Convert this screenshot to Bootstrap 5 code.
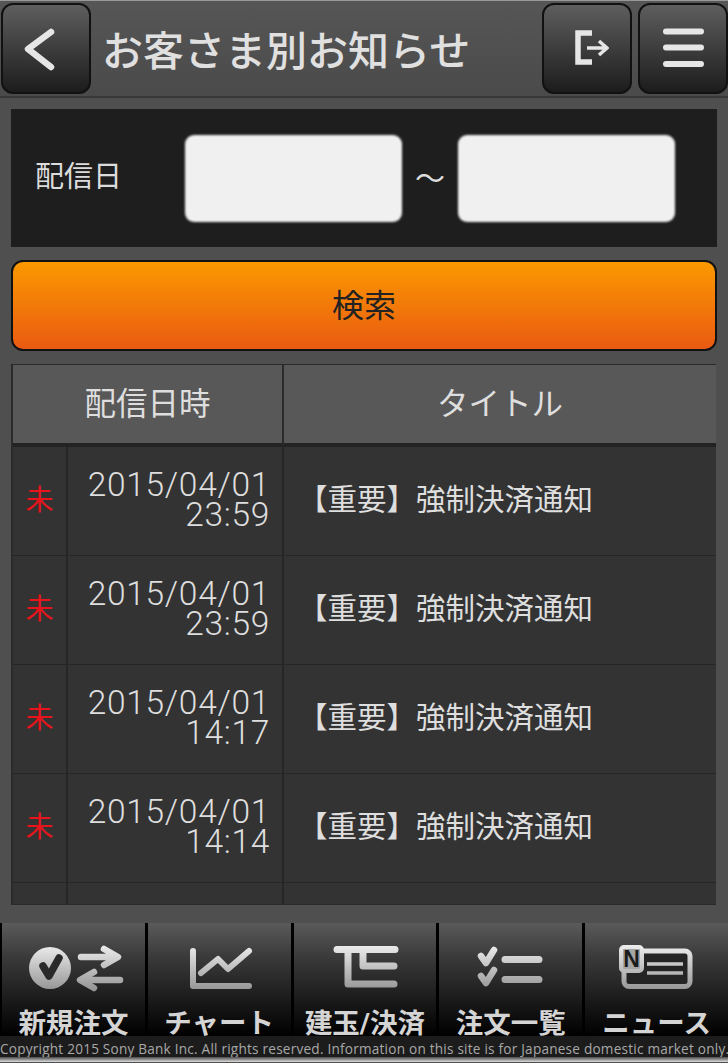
<!DOCTYPE html>
<html lang="ja">
<head>
  <meta charset="UTF-8">
  <title>お客さま別お知らせ</title>
  <link href="https://cdn.jsdelivr.net/npm/bootstrap@5.3.2/dist/css/bootstrap.min.css" rel="stylesheet">
  <style>
    html, body { height: 100%; }
    body { background: #4f4f4f; color: #e6e6e6; font-family: "Roboto", "Noto Sans CJK JP", sans-serif; overflow: hidden; }
    .screen { width: 728px; height: 1063px; }
    .top-bar { height: 98px; padding: 2px 0 3px 0; background: linear-gradient(#565656, #4a4a4a); border-top: 1px solid #999; border-bottom: 2px solid #383838; }
    .top-btn { width: 90px; height: 91px; padding: 0; border: 2px solid #111; border-radius: 12px; background: linear-gradient(#5e5e5e, #1c1c1c); display: flex; align-items: center; justify-content: center; flex-shrink: 0; }
    .top-btn:first-child { margin-left: 1px; }
    .gap-right { margin-right: 6px; }
    .page-title { margin: 0 0 0 11px; padding-top: 8px; font-size: 41px; font-weight: 500; color: #e0e0e0; line-height: 83px; }
    .search-box { margin: 11px 11px 0; height: 138px; background: #1e1e1e; }
    .date-label { width: 174px; padding-left: 24px; font-size: 29px; color: #dcdcdc; }
    .date-input.form-control { width: 217px; height: 87px; background: #f0f0f0; border: 0; border-radius: 9px; filter: blur(1px); }
    .date-sep { width: 56px; text-align: center; font-size: 30px; color: #ddd; }
    .search-btn.btn { display: block; width: 706px; height: 91px; margin: 13px 11px 0; border: 2px solid #111; border-radius: 12px; background: linear-gradient(#fb9900, #ea5a12); color: #222; font-size: 32px; }
    .list-wrap { margin: 13px 12px 0 11px; height: 541px; overflow: hidden; background: #333; border-top: 1px solid #2a2a2a; border-left: 2px solid #2a2a2a; border-bottom: 1px solid #2a2a2a; }
    .notice-table { width: 703px; margin: 0; table-layout: fixed; border-collapse: separate; border-spacing: 0; --bs-table-bg: transparent; --bs-table-color: #dedede; }
    .notice-table > :not(caption) > * > * { padding: 0; border: 0; box-shadow: none; }
    .notice-table thead th { height: 82px; padding-top: 2px; background: #585858; font-size: 31.5px; font-weight: 400; text-align: center; vertical-align: middle; color: #dedede; border-bottom: 4px solid #232323; }
    .notice-table thead th:first-child { border-right: 2px solid #2a2a2a; }
    .notice-table tbody td { height: 109px; vertical-align: middle; background: #333; border-bottom: 1px solid #262626; }
    .unread-cell { border-right: 2px solid #262626 !important; color: #e8141c !important; font-size: 28px; text-align: center; }
    .time-cell { border-right: 2px solid #262626 !important; font-size: 33.5px; font-weight: 300; letter-spacing: .7px; line-height: 30px; text-align: right; padding-right: 12px !important; padding-bottom: 2px !important; }
    .subject-cell { font-size: 29.5px; padding-left: 14px !important; padding-bottom: 2px !important; white-space: nowrap; }
    .bottom-nav { margin-top: 18px; height: 113px; background: #000; gap: 3px; padding-left: 2px; }
    .nav-cell { flex: 1 1 0; background: linear-gradient(#5a5a5a, #3a3a3a 30%, #000); text-align: center; padding-top: 16px; }
    .nav-cell svg { display: block; }
    .nav-text { padding-top: 3px; font-size: 27.5px; font-weight: 700; line-height: 25px; color: #d4d4d4; white-space: nowrap; }
    .copy-bar { height: 21px; padding-top: 3px; background: #1c1c1c; color: #a8a8a8; font-family: "Open Sans", sans-serif; font-size: 13.6px; letter-spacing: .22px; line-height: 20px; white-space: nowrap; overflow: hidden; }
    .edge-strip { height: 5px; background: linear-gradient(#4a4a4a, #dedede); }
  </style>
</head>
<body>
  <div class="screen d-flex flex-column">

    <header class="top-bar d-flex align-items-center">
      <button class="top-btn" type="button" aria-label="戻る">
        <svg width="44" height="48" viewBox="0 0 44 48"><path d="M27 8 L4 25 L27 43" fill="none" stroke="#e6e6e6" stroke-width="6.5" stroke-linecap="round" stroke-linejoin="round"/></svg>
      </button>
      <h1 class="page-title flex-grow-1">お客さま別お知らせ</h1>
      <button class="top-btn gap-right" type="button" aria-label="ログアウト">
        <svg width="44" height="44" viewBox="0 0 44 44"><path d="M27 7 H13 V36 H27" fill="none" stroke="#e6e6e6" stroke-width="5.5"/><path d="M22 22 H42 M34 15 L42 22 L34 29" fill="none" stroke="#e6e6e6" stroke-width="3.5"/></svg>
      </button>
      <button class="top-btn" type="button" aria-label="メニュー">
        <svg width="44" height="40" viewBox="0 0 44 40"><path d="M5 3.5 H40 M5 19.5 H40 M5 36 H40" stroke="#e6e6e6" stroke-width="6" stroke-linecap="round"/></svg>
      </button>
    </header>

    <div class="search-box d-flex align-items-center">
      <div class="date-label">配信日</div>
      <input class="date-input form-control" type="text" aria-label="開始日">
      <div class="date-sep">～</div>
      <input class="date-input form-control" type="text" aria-label="終了日">
    </div>

    <button class="search-btn btn" type="button">検索</button>

    <div class="list-wrap">
      <table class="notice-table table">
        <colgroup><col style="width:55px"><col style="width:216px"><col></colgroup>
        <thead>
          <tr><th colspan="2">配信日時</th><th>タイトル</th></tr>
        </thead>
        <tbody id="noticeBody"></tbody>
      </table>
    </div>

    <nav class="bottom-nav d-flex">
      <div class="nav-cell">
        <svg width="142" height="69" viewBox="0 0 142 69">
          <defs><linearGradient id="iconFill" gradientUnits="userSpaceOnUse" x1="0" y1="5" x2="0" y2="55"><stop offset="0" stop-color="#efefef"/><stop offset="1" stop-color="#8e8e8e"/></linearGradient></defs>
          <circle cx="48" cy="29" r="21" fill="url(#iconFill)"/>
          <path d="M41 27 L47 37 L57 19" fill="none" stroke="#2a2a2a" stroke-width="7.5" stroke-linecap="round" stroke-linejoin="round"/>
          <path d="M79 18 H113 M102 10 L116 18 L102 26" fill="none" stroke="url(#iconFill)" stroke-width="6.5" stroke-linecap="round" stroke-linejoin="round"/>
          <path d="M118 41 H82 M92 33 L78 41 L92 49" fill="none" stroke="url(#iconFill)" stroke-width="6.5" stroke-linecap="round" stroke-linejoin="round"/>
        </svg>
        <div class="nav-text">新規注文</div>
      </div>
      <div class="nav-cell">
        <svg width="142" height="69" viewBox="0 0 142 69">
          <path d="M45 12 V47 H101" fill="none" stroke="url(#iconFill)" stroke-width="6" stroke-linecap="round" stroke-linejoin="round"/>
          <path d="M53 34 L70 20 L80 30 L101 12" fill="none" stroke="url(#iconFill)" stroke-width="6" stroke-linecap="round" stroke-linejoin="round"/>
        </svg>
        <div class="nav-text">チャート</div>
      </div>
      <div class="nav-cell">
        <svg width="142" height="69" viewBox="0 0 142 69">
          <path d="M43 10.5 H101 M54 10.5 V45 H100 M69 10.5 V27 H100" fill="none" stroke="url(#iconFill)" stroke-width="7" stroke-linecap="round" stroke-linejoin="round"/>
        </svg>
        <div class="nav-text">建玉/決済</div>
      </div>
      <div class="nav-cell">
        <svg width="142" height="69" viewBox="0 0 142 69">
          <path d="M42 17 L47 24 L55 11 M42 37 L47 44 L55 31" fill="none" stroke="url(#iconFill)" stroke-width="6.5" stroke-linecap="round" stroke-linejoin="round"/>
          <path d="M66 20.5 H100 M66 40.5 H100" stroke="url(#iconFill)" stroke-width="7" stroke-linecap="round"/>
        </svg>
        <div class="nav-text">注文一覧</div>
      </div>
      <div class="nav-cell">
        <svg width="142" height="69" viewBox="0 0 142 69">
          <rect x="39" y="12" width="66" height="35.500" rx="5" fill="#242424" stroke="url(#iconFill)" stroke-width="5"/>
          <rect x="36" y="8" width="21" height="24" rx="3" fill="#a6a6a6" stroke="url(#iconFill)" stroke-width="4"/>
          <text x="46.500" y="28" font-family="Liberation Sans, sans-serif" font-size="23" font-weight="700" text-anchor="middle" fill="#1c1c1c">N</text>
          <path d="M62 25 H98 M62 34 H98" stroke="url(#iconFill)" stroke-width="3.500"/>
        </svg>
        <div class="nav-text">ニュース</div>
      </div>
    </nav>

    <div class="copy-bar">Copyright 2015 Sony Bank Inc. All rights reserved. Information on this site is for Japanese domestic market only.</div>
    <div class="edge-strip"></div>
  </div>

  <script src="https://cdn.jsdelivr.net/npm/bootstrap@5.3.2/dist/js/bootstrap.bundle.min.js"></script>
  <script>
    const notices = [
      { date: '2015/04/01', time: '23:59', title: '【重要】強制決済通知' },
      { date: '2015/04/01', time: '23:59', title: '【重要】強制決済通知' },
      { date: '2015/04/01', time: '14:17', title: '【重要】強制決済通知' },
      { date: '2015/04/01', time: '14:14', title: '【重要】強制決済通知' },
      { date: '', time: '', title: '' }
    ];

    const tbody = document.getElementById('noticeBody');
    notices.forEach(n => {
      const row = document.createElement('tr');
      row.innerHTML = `
        <td class="unread-cell">${n.date ? '未' : ''}</td>
        <td class="time-cell">${n.date}<br>${n.time}</td>
        <td class="subject-cell">${n.title}</td>
      `;
      tbody.appendChild(row);
    });
  </script>
</body>
</html>
